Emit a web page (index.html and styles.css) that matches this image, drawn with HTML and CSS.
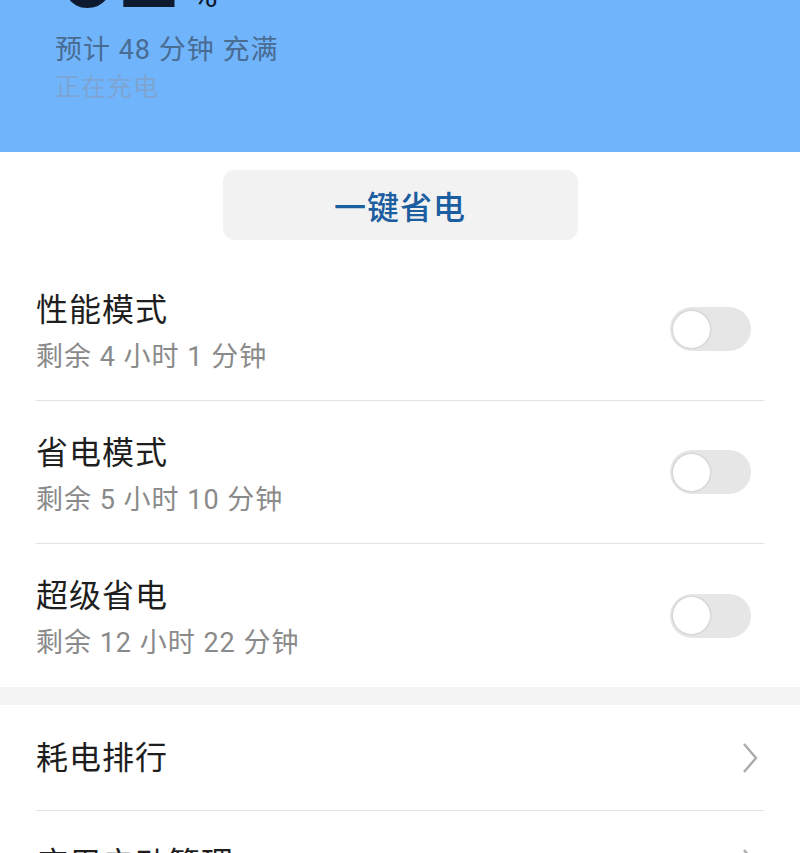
FILE: index.html
```html
<!DOCTYPE html>
<html lang="zh-CN">
<head>
    <meta charset="utf-8">
    <meta name="viewport" content="width=device-width, initial-scale=1.0">
    <title>电池</title>
    <link rel="stylesheet" href="styles.css">
</head>
<body>
    <div class="header">
        <div class="level">62<span class="pct">%</span></div>
        <div class="eta">预计 48 分钟 充满</div>
        <div class="state">正在充电</div>
    </div>

    <div class="action">
        <button class="save-btn">一键省电</button>
    </div>

    <div class="list">
        <div class="row">
            <div class="row-inner">
                <div class="text">
                    <div class="title">性能模式</div>
                    <div class="sub">剩余 4 小时 1 分钟</div>
                </div>
                <div class="switch"><span class="knob"></span></div>
            </div>
        </div>
        <div class="row">
            <div class="row-inner">
                <div class="text">
                    <div class="title">省电模式</div>
                    <div class="sub">剩余 5 小时 10 分钟</div>
                </div>
                <div class="switch"><span class="knob"></span></div>
            </div>
        </div>
        <div class="row">
            <div class="row-inner last">
                <div class="text">
                    <div class="title">超级省电</div>
                    <div class="sub">剩余 12 小时 22 分钟</div>
                </div>
                <div class="switch"><span class="knob"></span></div>
            </div>
        </div>
    </div>

    <div class="gap"></div>

    <div class="list">
        <div class="link">
            <div class="link-inner">
                <span class="title">耗电排行</span>
                <svg class="chevron" width="18" height="32" viewBox="0 0 18 32">
                    <polyline points="3,2 15,16 3,30" fill="none" stroke="#ababab" stroke-width="2.4"/>
                </svg>
            </div>
        </div>
        <div class="link">
            <div class="link-inner">
                <span class="title">应用启动管理</span>
                <svg class="chevron" width="18" height="32" viewBox="0 0 18 32">
                    <polyline points="3,2 15,16 3,30" fill="none" stroke="#ababab" stroke-width="2.4"/>
                </svg>
            </div>
        </div>
    </div>
</body>
</html>
```

FILE: styles.css
```css
body {
    font-family: Roboto, "Noto Sans CJK SC", sans-serif;
    margin: 0;
    padding: 0;
    background-color: #fff;
    overflow: hidden;
}
.header {
    background-color: #70b4fc;
    height: 152px;
    overflow: hidden;
    padding: 0 55px;
}
.level {
    font-family: Roboto, sans-serif;
    font-size: 110px;
    line-height: 1;
    color: #0e1a30;
    margin-top: -85px;
}
.pct {
    font-size: 34px;
    margin-left: 14px;
}
.eta {
    font-size: 27px;
    letter-spacing: 1px;
    line-height: 38px;
    color: #496c93;
    margin-top: 6px;
}
.state {
    font-size: 25px;
    letter-spacing: 1px;
    line-height: 38px;
    color: #7da4d2;
}
.action {
    display: flex;
    justify-content: center;
    padding: 18px 0;
}
.save-btn {
    width: 355px;
    height: 70px;
    border: none;
    border-radius: 12px;
    background-color: #f2f2f2;
    color: #1c5e9f;
    font-family: inherit;
    font-size: 32px;
    letter-spacing: 1px;
    font-weight: 500;
}
.row {
    padding: 0 36px;
}
.row-inner {
    height: 142px;
    border-bottom: 1px solid #e2e2e2;
    display: flex;
    align-items: center;
    justify-content: space-between;
}
.row-inner.last {
    border-bottom: none;
    height: 143px;
}
.text {
    padding-top: 8px;
}
.title {
    font-size: 32px;
    letter-spacing: 1px;
    line-height: 44px;
    color: #1e1e1e;
}
.sub {
    font-size: 27px;
    letter-spacing: 1px;
    line-height: 44px;
    color: #8a8a8a;
    margin-top: 3px;
}
.switch {
    width: 81px;
    height: 44px;
    border-radius: 22px;
    background-color: #e6e6e6;
    display: flex;
    align-items: center;
    padding-left: 3px;
    box-sizing: border-box;
    margin-right: 13px;
}
.knob {
    width: 37px;
    height: 37px;
    border-radius: 50%;
    background-color: #fff;
    box-shadow: 0 0 0 1.5px #d8d8d8;
}
.gap {
    height: 18px;
    background-color: #f4f4f4;
}
.link {
    padding: 0 36px;
}
.link-inner {
    height: 105px;
    border-bottom: 1px solid #e2e2e2;
    display: flex;
    align-items: center;
    justify-content: space-between;
}
.link-inner .title {
    font-size: 32px;
}
.chevron {
    margin-right: 5px;
}
```
